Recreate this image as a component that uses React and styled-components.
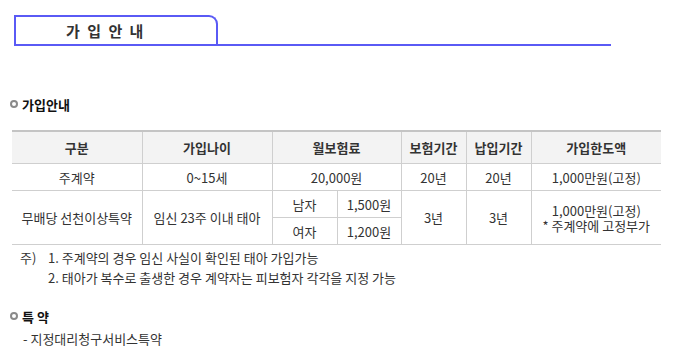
import React from "react";
import styled, { createGlobalStyle } from "styled-components";

const Global = createGlobalStyle`
  html, body { margin: 0; padding: 0; background: #fff; }
  body { font-family: "Noto Sans CJK KR", "Noto Sans", sans-serif; color: #333; }
`;

const Page = styled.div`
  width: 673px;
  height: 363px;
  overflow: hidden;
  padding-top: 15px;
  box-sizing: border-box;
`;

const TitleBar = styled.div`
  margin-left: 14px;
  width: 597px;
  border-bottom: 2px solid #5a5af5;
  display: flex;
`;

const Tab = styled.div`
  height: 27px;
  border: 2px solid #5a5af5;
  border-bottom: none;
  border-top-right-radius: 9px;
  display: flex;
  align-items: center;
  padding-left: 50px;
  box-sizing: content-box;
  width: 150px;
  font-size: 15px;
  font-weight: 700;
  color: #333;
  word-spacing: 3px;
  letter-spacing: 0.5px;
`;

const SectionTitle = styled.div`
  display: flex;
  align-items: center;
  gap: 4px;
  margin-left: 10px;
  margin-top: ${(p) => p.$top}px;
  height: 18px;
  font-size: 13px;
  font-weight: 700;
  color: #111;
`;

const Dot = styled.span`
  width: 4px;
  height: 4px;
  border: 2px solid #8a8a8a;
  border-radius: 50%;
  background: #fff;
  flex: none;
`;

const Table = styled.table`
  margin-left: 12px;
  margin-top: 17px;
  width: 649px;
  border-collapse: collapse;
  table-layout: fixed;
  border-top: 2px solid #c4c4c4;
  font-size: 13px;
  color: #333;
`;

const Th = styled.th`
  height: 31px;
  padding: 0;
  background: #f3f3f3;
  font-weight: 700;
  border-bottom: 1px solid #cfcfcf;
  border-left: ${(p) => (p.$first ? "none" : "1px solid #cfcfcf")};
  text-align: center;
`;

const Td = styled.td`
  height: 26px;
  padding: 0;
  text-align: center;
  border-bottom: 1px solid #cfcfcf;
  border-left: ${(p) => (p.$first ? "none" : "1px solid #cfcfcf")};
  line-height: 15px;
`;

const Notes = styled.div`
  margin-top: 4px;
  margin-left: 20px;
  display: grid;
  grid-template-columns: 28px auto;
  row-gap: 2px;
  font-size: 13px;
  line-height: 18px;
  color: #333;
`;

const ListItem = styled.div`
  margin-left: 23px;
  margin-top: 4px;
  font-size: 13px;
  color: #333;
`;

export default function App() {
  return (
    <Page>
      <Global />
      <TitleBar>
        <Tab>가 입 안 내</Tab>
      </TitleBar>
      <SectionTitle $top={49}>
        <Dot />
        가입안내
      </SectionTitle>
      <Table>
        <colgroup>
          <col style={{ width: 130 }} />
          <col style={{ width: 130 }} />
          <col style={{ width: 65 }} />
          <col style={{ width: 64 }} />
          <col style={{ width: 65 }} />
          <col style={{ width: 65 }} />
          <col style={{ width: 130 }} />
        </colgroup>
        <thead>
          <tr>
            <Th $first>구분</Th>
            <Th>가입나이</Th>
            <Th colSpan={2}>월보험료</Th>
            <Th>보험기간</Th>
            <Th>납입기간</Th>
            <Th>가입한도액</Th>
          </tr>
        </thead>
        <tbody>
          <tr>
            <Td $first>주계약</Td>
            <Td>0~15세</Td>
            <Td colSpan={2}>20,000원</Td>
            <Td>20년</Td>
            <Td>20년</Td>
            <Td>1,000만원(고정)</Td>
          </tr>
          <tr>
            <Td $first rowSpan={2}>무배당 선천이상특약</Td>
            <Td rowSpan={2}>임신 23주 이내 태아</Td>
            <Td>남자</Td>
            <Td>1,500원</Td>
            <Td rowSpan={2}>3년</Td>
            <Td rowSpan={2}>3년</Td>
            <Td rowSpan={2}>
              1,000만원(고정)
              <br />* 주계약에 고정부가
            </Td>
          </tr>
          <tr>
            <Td>여자</Td>
            <Td>1,200원</Td>
          </tr>
        </tbody>
      </Table>
      <Notes>
        <span>주)</span>
        <span>1. 주계약의 경우 임신 사실이 확인된 태아 가입가능</span>
        <span />
        <span>2. 태아가 복수로 출생한 경우 계약자는 피보험자 각각을 지정 가능</span>
      </Notes>
      <SectionTitle $top={20}>
        <Dot />
        특 약
      </SectionTitle>
      <ListItem>- 지정대리청구서비스특약</ListItem>
    </Page>
  );
}
